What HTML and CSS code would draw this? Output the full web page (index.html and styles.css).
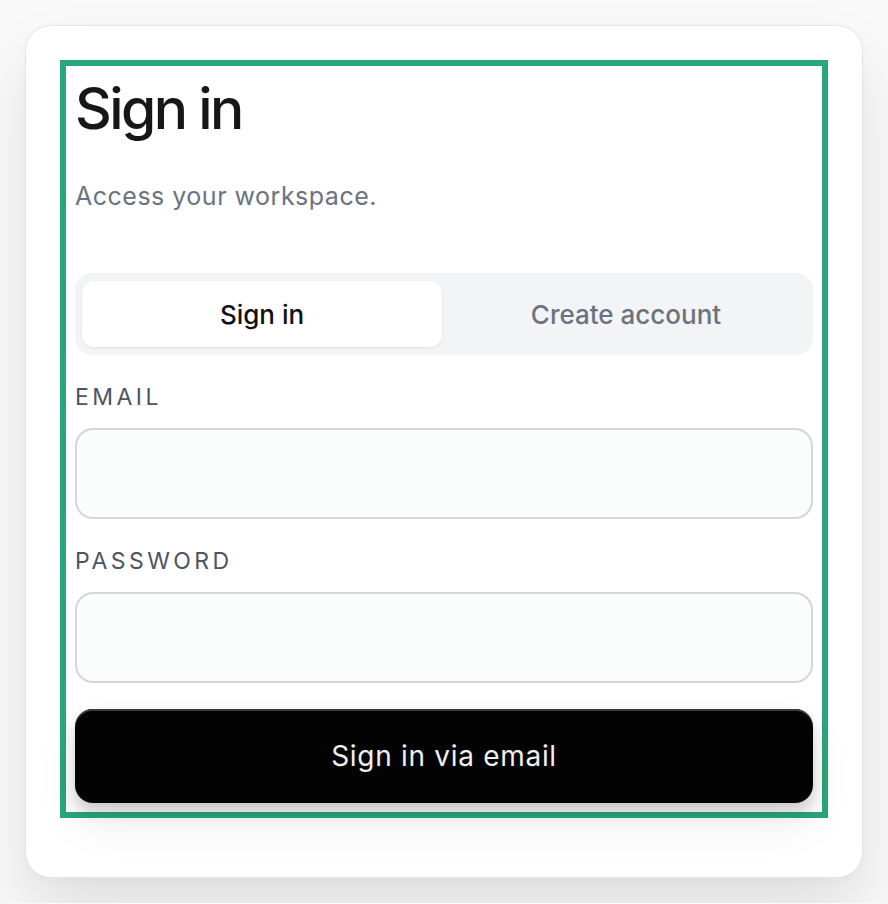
FILE: index.html
```html
<!DOCTYPE html>
<html lang="en">
<head>
<meta charset="utf-8">
<title>Sign in</title>
<link rel="stylesheet" href="styles.css">
</head>
<body>
<main class="page">
  <section class="card">
    <form class="panel">
      <h1 class="title">Sign in</h1>
      <p class="subtitle">Access your workspace.</p>
      <div class="tabs">
        <button type="button" class="tab tab-active">Sign in</button>
        <button type="button" class="tab">Create account</button>
      </div>
      <label class="field">
        <span class="label">Email</span>
        <input class="input" type="email">
      </label>
      <label class="field">
        <span class="label">Password</span>
        <input class="input" type="password">
      </label>
      <button type="button" class="submit">Sign in via email</button>
    </form>
  </section>
</main>
</body>
</html>
```
FILE: styles.css
```css
* { box-sizing: border-box; }
html, body { margin: 0; padding: 0; }
body {
  background: #f9f9fa;
  font-family: Inter, "Noto Sans", sans-serif;
  color: #171717;
}
.page {
  padding: 25px;
  display: flex;
  justify-content: center;
}
.card {
  width: 838px;
  background: #ffffff;
  border: 1px solid #e4e4e9;
  border-radius: 26px;
  padding: 34px 34px 59px;
  box-shadow: 0 40px 70px rgba(0, 0, 0, 0.1), 0 4px 12px rgba(0, 0, 0, 0.02);
}
.panel {
  border: 6px solid #2aa77a;
  padding: 9px;
  display: flex;
  flex-direction: column;
  margin: 0;
}
.title {
  margin: 0;
  font-size: 57px;
  font-weight: 500;
  letter-spacing: -0.045em;
  line-height: 1;
  padding-top: 5px;
  color: #171717;
}
.subtitle {
  margin: 44px 0 0;
  font-size: 25px;
  line-height: 1.2;
  letter-spacing: 0.02em;
  color: #6b7280;
}
.tabs {
  margin-top: 62px;
  background: #f3f4f6;
  border-radius: 16px;
  padding: 8px 7px;
  display: grid;
  grid-template-columns: 1fr 1fr;
  gap: 4px;
}
.tab {
  height: 66px;
  border: 0;
  background: transparent;
  border-radius: 12px;
  font-family: inherit;
  font-size: 26px;
  font-weight: 500;
  color: #6b7280;
}
.tab-active {
  background: #ffffff;
  color: #111111;
  box-shadow: 0 1px 3px rgba(0, 0, 0, 0.08);
}
.field {
  display: flex;
  flex-direction: column;
}
.label {
  margin-top: 29px;
  font-size: 23px;
  line-height: 26px;
  letter-spacing: 0.15em;
  text-transform: uppercase;
  color: #4b5563;
}
.input {
  margin-top: 18px;
  height: 91px;
  border: 2px solid #d4d6d8;
  border-radius: 18px;
  background: #fbfcfc;
  font-family: inherit;
  font-size: 24px;
}
.submit {
  margin-top: 26px;
  height: 94px;
  border: 0;
  border-radius: 18px;
  background: #030303;
  color: #efefef;
  font-family: inherit;
  font-size: 28px;
  font-weight: 400;
  letter-spacing: 0.025em;
  box-shadow: inset 0 2px 0 #3a3a3a, 0 8px 14px rgba(0, 0, 0, 0.16), 0 22px 40px rgba(0, 0, 0, 0.08);
}
```
